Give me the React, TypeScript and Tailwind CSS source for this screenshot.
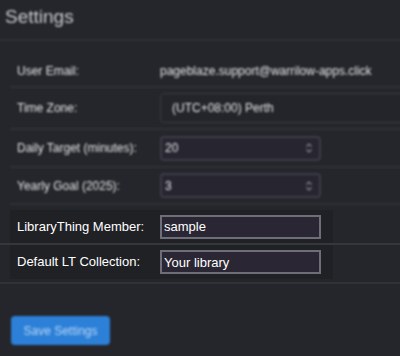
const Spinner = () => (
  <svg width="8" height="12" viewBox="0 0 8 12" className="text-[#8a8a94]">
    <path d="M1.5 4.5 L4 2 L6.5 4.5" fill="none" stroke="currentColor" strokeWidth="1.2" />
    <path d="M1.5 7.5 L4 10 L6.5 7.5" fill="none" stroke="currentColor" strokeWidth="1.2" />
  </svg>
);

const App = () => {
  return (
    <div className="w-[400px] h-[356px] overflow-hidden bg-[#24262b] text-[#e6e6e6] font-['Liberation_Sans',Arial,sans-serif]">
      {/* Header + blurred upper part */}
      <div className="blur-[1px]">
        <h2 className="h-[41px] px-[5px] pt-[3px] text-[19px] text-[#c9cbd0] border-b-2 border-[#2e3136]">
          Settings
        </h2>
        <div className="ml-[10px] w-[420px] pt-[14px]">
          <div className="flex items-center h-[33px] border-b-2 border-[#2f3237] text-[12px]">
            <span className="w-[150px] shrink-0 pl-[7px]">User Email:</span>
            <span>pageblaze.support@warrilow-apps.click</span>
          </div>
          <div className="flex items-center h-[42px] border-b-2 border-[#2f3237] text-[12px]">
            <span className="w-[150px] shrink-0 pl-[7px]">Time Zone:</span>
            <div className="flex items-center h-[30px] w-[300px] shrink-0 pl-[11px] border border-[#3a3d44] rounded bg-[#23252b]">
              (UTC+08:00) Perth
            </div>
          </div>
          <div className="flex items-center h-[38px] border-b-2 border-[#2f3237] text-[12px]">
            <span className="w-[150px] shrink-0 pl-[7px]">Daily Target (minutes):</span>
            <div className="flex items-center justify-between h-[25px] w-[161px] px-[3px] pr-[6px] border-2 border-[#3d3d47] rounded bg-[#272530]">
              <span>20</span>
              <Spinner />
            </div>
          </div>
          <div className="flex items-center h-[37px] border-b-2 border-[#2f3237] text-[12px]">
            <span className="w-[150px] shrink-0 pl-[7px]">Yearly Goal (2025):</span>
            <div className="flex items-center justify-between h-[25px] w-[161px] px-[3px] pr-[6px] border-2 border-[#3d3d47] rounded bg-[#272530]">
              <span>3</span>
              <Spinner />
            </div>
          </div>
        </div>
      </div>

      {/* LibraryThing rows */}
      <div className="pt-[5px]">
        <div className="border-b-2 border-[#34373c]">
          <div className="ml-[10px] w-[323px] flex items-center h-[33px] bg-[#1f2125] text-[13px] text-white">
            <span className="w-[150px] shrink-0 pl-[7px]">LibraryThing Member:</span>
            <input
              readOnly
              value="sample"
              className="h-[24px] w-[161px] px-[2px] bg-[#2a2633] border-2 border-[#6e6e78] text-[13px] text-white outline-none"
            />
          </div>
        </div>
        <div className="pb-[3px] border-b-2 border-[#2f3237]">
          <div className="ml-[10px] w-[323px] flex items-center h-[34px] bg-[#1f2125] text-[13px] text-white">
            <span className="w-[150px] shrink-0 pl-[7px]">Default LT Collection:</span>
            <input
              readOnly
              value="Your library"
              className="h-[24px] w-[161px] px-[2px] bg-[#2a2633] border-2 border-[#6e6e78] text-[13px] text-white outline-none"
            />
          </div>
        </div>
      </div>

      {/* Save button */}
      <div className="pt-[32px] pl-[11px] blur-[1px]">
        <button className="h-[29px] w-[99px] rounded bg-[#2c80d8] text-[12px] text-[#b7d6f5]">
          Save Settings
        </button>
      </div>
    </div>
  );
};

export default App;
